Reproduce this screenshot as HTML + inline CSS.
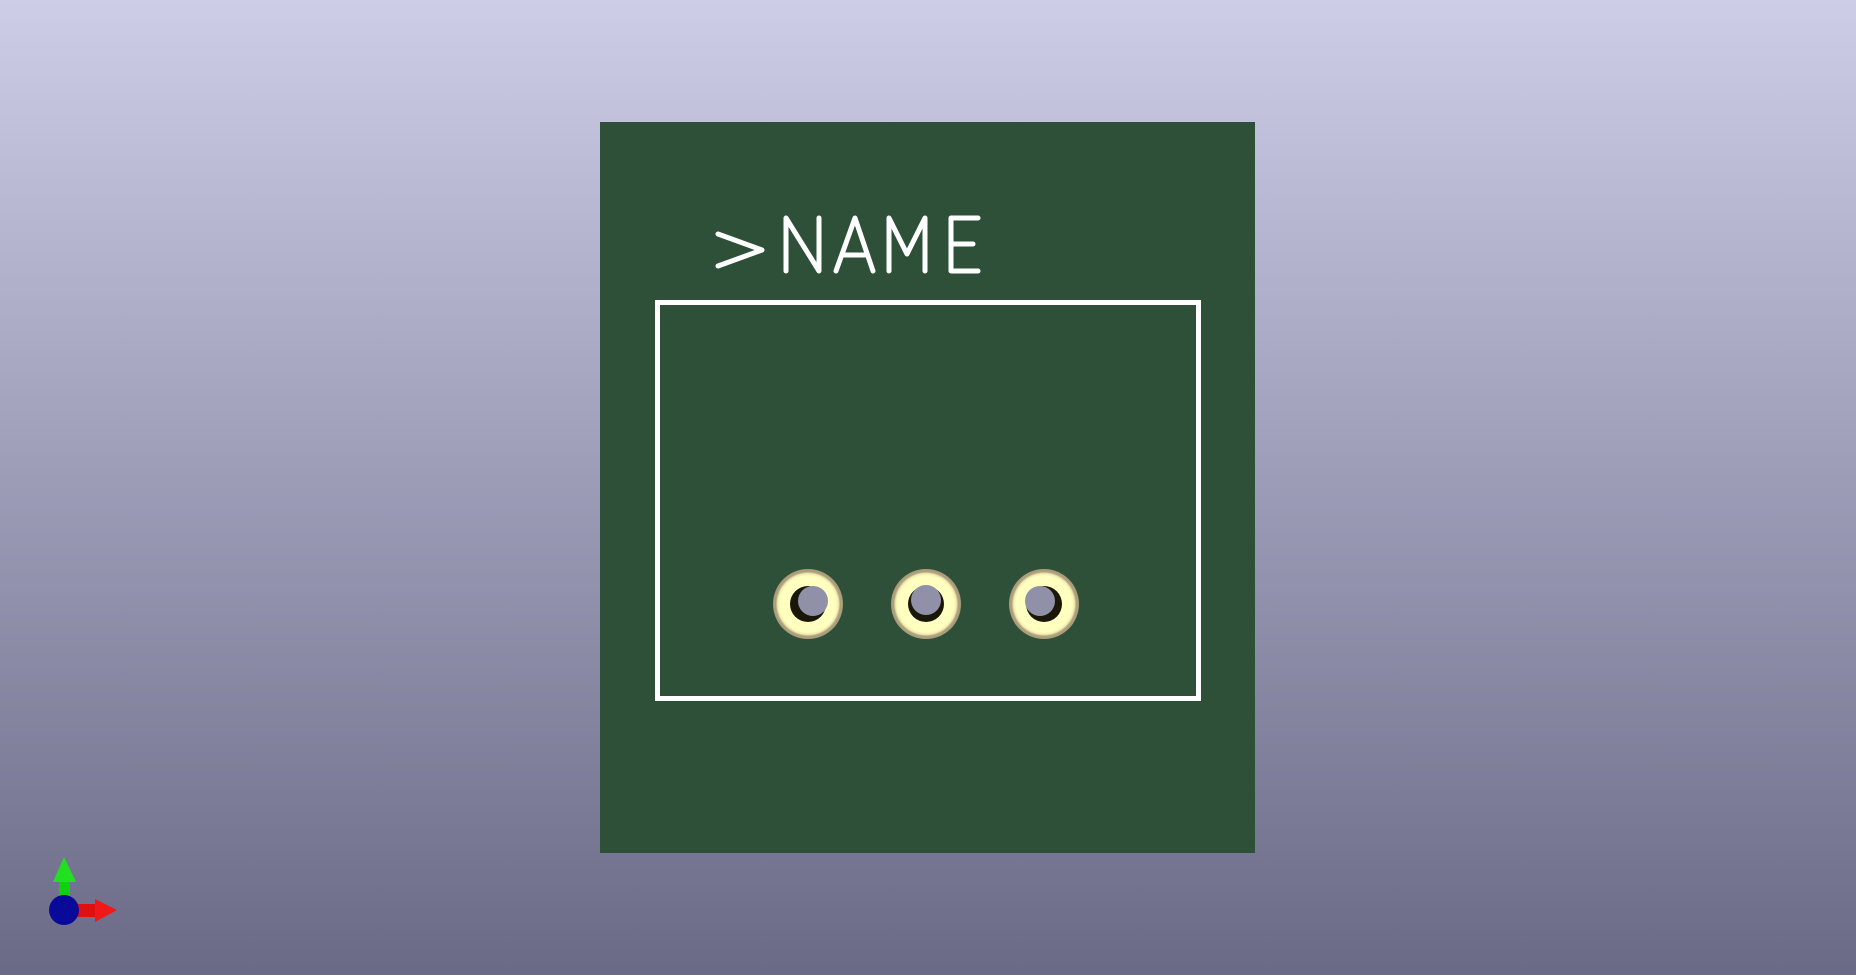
<!DOCTYPE html>
<html><head><style>
html,body{margin:0;padding:0;width:1856px;height:975px;overflow:hidden;background:linear-gradient(#cdcde7,#6a6a86);}
svg{position:absolute;left:0;top:0}
</style></head><body>
<svg width="1856" height="975" viewBox="0 0 1856 975">
<defs>
<radialGradient id="pad" cx="50%" cy="50%" r="50%">
<stop offset="0.8" stop-color="#ffffc0"/><stop offset="0.87" stop-color="#f0ecb0"/><stop offset="0.92" stop-color="#b0a27e"/><stop offset="1" stop-color="#a89a78"/>
</radialGradient>
</defs>
<rect x="600" y="122" width="655" height="731" fill="#2e5039"/>
<rect x="657.5" y="302.5" width="541" height="396" fill="none" stroke="#fff" stroke-width="5"/>
<g fill="none" stroke="#fff" stroke-width="5" stroke-linecap="round" stroke-linejoin="round">
<path d="M718 234 L762 250 L718 266"/>
<path d="M786 271 V218 L819 271 V218"/>
<path d="M836 271 L855 218 L873 271 M842 255 H867"/>
<path d="M889 271 V218 L907 254 L925 218 V271"/>
<path d="M978 218 H951 V271 H978 M951 244 H973"/>
</g>
<g>
<circle cx="808" cy="604" r="35" fill="url(#pad)"/>
<circle cx="808" cy="604" r="18" fill="#1a1608"/>
<circle cx="813" cy="601" r="15" fill="#9090a8"/>
<circle cx="926" cy="604" r="35" fill="url(#pad)"/>
<circle cx="926" cy="604" r="18" fill="#1a1608"/>
<circle cx="926" cy="600" r="15" fill="#9090a8"/>
<circle cx="1044" cy="604" r="35" fill="url(#pad)"/>
<circle cx="1044" cy="604" r="18" fill="#1a1608"/>
<circle cx="1040" cy="601" r="15" fill="#9090a8"/>
</g>
<rect x="59" y="880" width="11" height="20" fill="#10d010"/>
<polygon points="64,857 53,882 76,882" fill="#20e020"/>
<rect x="76" y="904" width="20" height="13" fill="#e01010"/>
<polygon points="95,899 95,922 117,910" fill="#f01818"/>
<circle cx="64" cy="910" r="15" fill="#0a0a9a"/>
</svg>
</body></html>
